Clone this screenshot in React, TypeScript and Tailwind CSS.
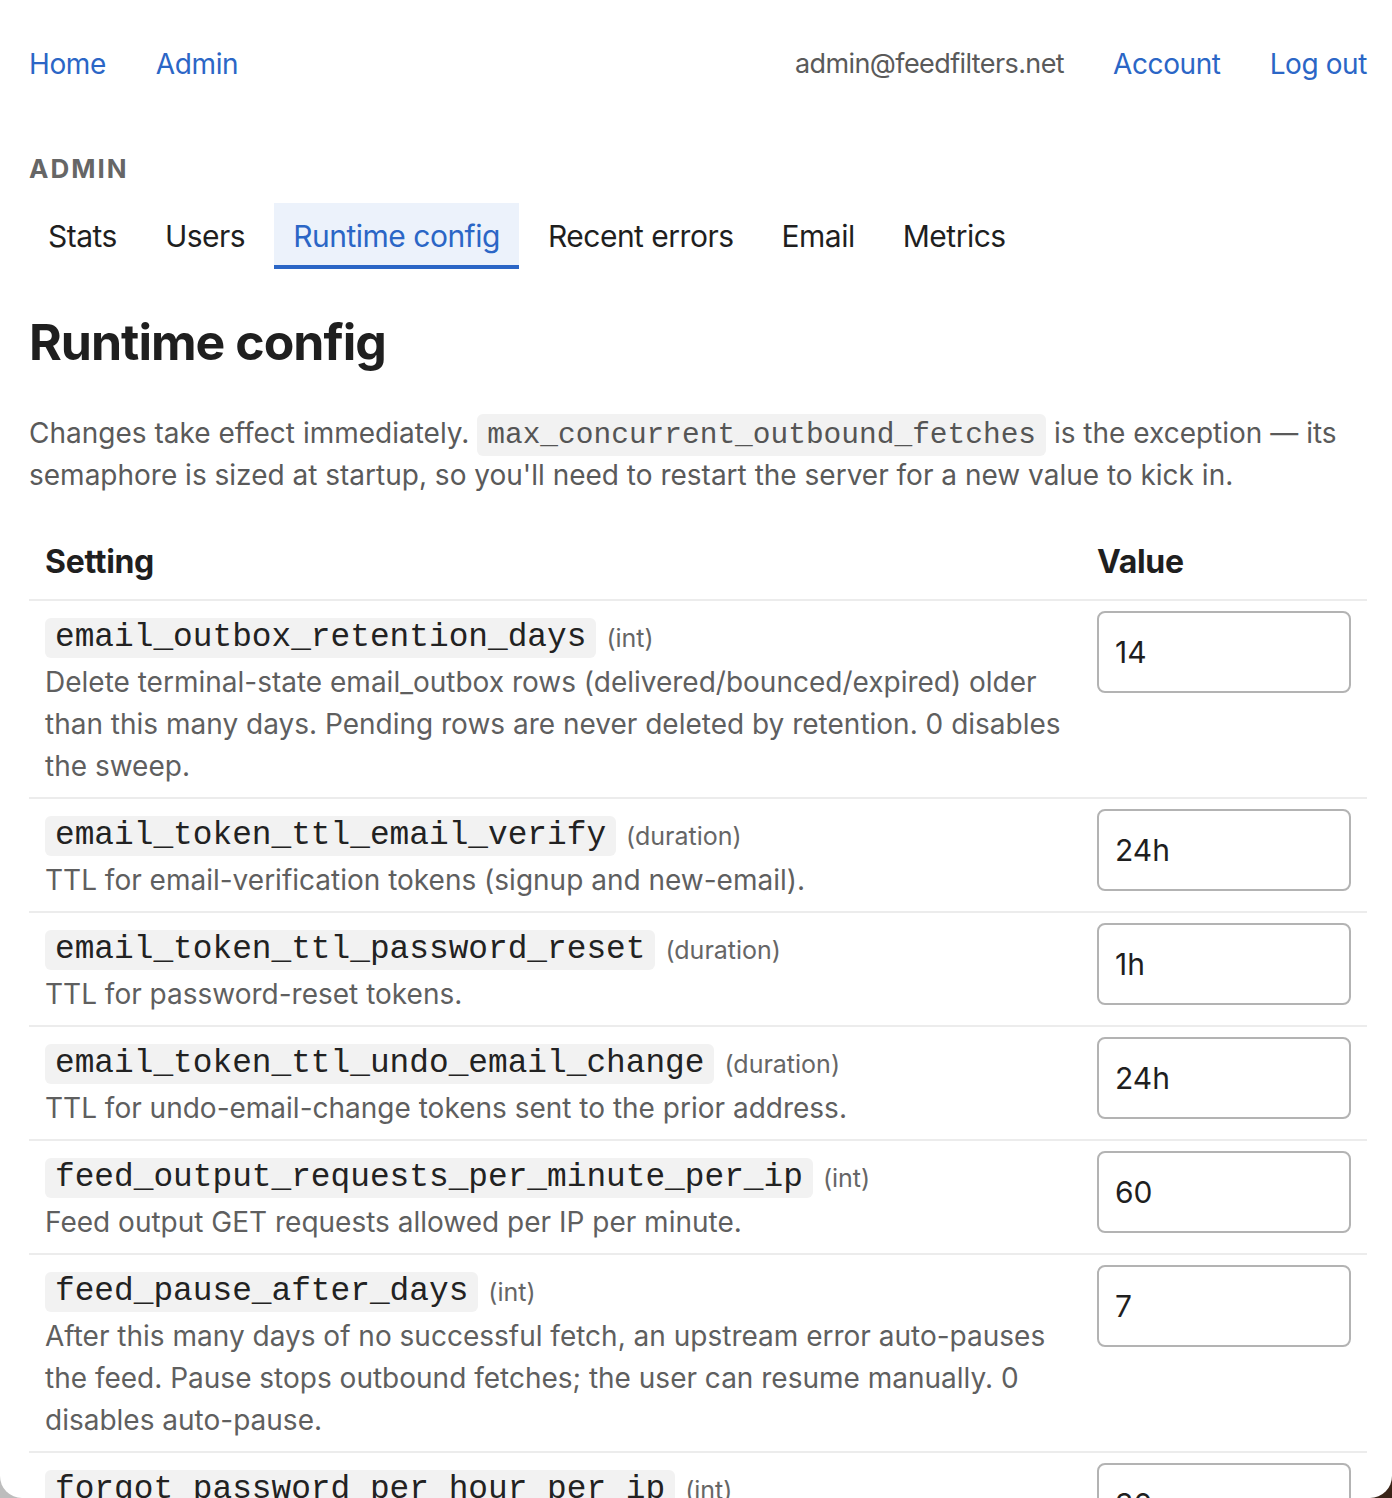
const SANS = "font-['Inter','Noto_Sans',sans-serif]";
const MONO = "font-['Liberation_Mono','DejaVu_Sans_Mono',monospace]";

type Setting = {
  key: string;
  kind: string;
  description: string;
  value: string;
};

const SETTINGS: Setting[] = [
  {
    key: "email_outbox_retention_days",
    kind: "int",
    description:
      "Delete terminal-state email_outbox rows (delivered/bounced/expired) older than this many days. Pending rows are never deleted by retention. 0 disables the sweep.",
    value: "14",
  },
  {
    key: "email_token_ttl_email_verify",
    kind: "duration",
    description: "TTL for email-verification tokens (signup and new-email).",
    value: "24h",
  },
  {
    key: "email_token_ttl_password_reset",
    kind: "duration",
    description: "TTL for password-reset tokens.",
    value: "1h",
  },
  {
    key: "email_token_ttl_undo_email_change",
    kind: "duration",
    description: "TTL for undo-email-change tokens sent to the prior address.",
    value: "24h",
  },
  {
    key: "feed_output_requests_per_minute_per_ip",
    kind: "int",
    description: "Feed output GET requests allowed per IP per minute.",
    value: "60",
  },
  {
    key: "feed_pause_after_days",
    kind: "int",
    description:
      "After this many days of no successful fetch, an upstream error auto-pauses the feed. Pause stops outbound fetches; the user can resume manually. 0 disables auto-pause.",
    value: "7",
  },
  {
    key: "forgot_password_per_hour_per_ip",
    kind: "int",
    description: "Forgot-password requests allowed per IP per hour.",
    value: "30",
  },
];

const TABS = ["Stats", "Users", "Runtime config", "Recent errors", "Email", "Metrics"];

function TopNav() {
  return (
    <nav className="flex h-[86px] items-end justify-between pb-[2px] text-[28px] leading-[40px] tracking-[-0.4px]">
      <div className="flex gap-[50px] text-[#2b66c6]">
        <a>Home</a>
        <a>Admin</a>
      </div>
      <div className="flex items-end gap-[49px]">
        <span className="text-[27px] tracking-[-0.6px] text-[#5a5a5a]">admin@feedfilters.net</span>
        <a className="text-[#2b66c6]">Account</a>
        <a className="text-[#2b66c6]">Log out</a>
      </div>
    </nav>
  );
}

function Tabs() {
  return (
    <div className="mt-[19px] flex gap-[10px]">
      {TABS.map((tab) => {
        const active = tab === "Runtime config";
        return (
          <div
            key={tab}
            className={
              active
                ? "flex h-[66px] items-center border-b-4 border-[#2b66c6] bg-[#ecf2fb] px-[19px] pt-[4px] text-[30px] tracking-[-0.5px] text-[#2b66c6]"
                : "flex h-[66px] items-center border-b-4 border-transparent px-[19px] pt-[4px] text-[30px] tracking-[-0.5px] text-[#1f1f1f]"
            }
          >
            {tab}
          </div>
        );
      })}
    </div>
  );
}

function SettingRow({ setting }: { setting: Setting }) {
  return (
    <tr className="border-t-2 border-[#ececec] align-top">
      <td className="pt-[14px] pr-[16px] pb-[10px] pl-[16px]">
        <div className="flex items-center gap-[10px] leading-[46px]">
          <code
            className={`${MONO} rounded-[6px] bg-[#f2f2f2] px-[10px] py-[1px] text-[32.8px] leading-[38px] text-[#222]`}
          >
            {setting.key}
          </code>
          <span className="text-[25px] text-[#666]">({setting.kind})</span>
        </div>
        <p className="text-[28px] leading-[42px] text-[#5f5f5f]">{setting.description}</p>
      </td>
      <td className="w-[286px] pt-[10px] pr-[16px] pb-[10px] pl-[16px]">
        <input
          readOnly
          value={setting.value}
          className={`${SANS} h-[82px] w-[254px] rounded-[8px] border-2 border-[#b3b3b3] bg-white px-[16px] text-[30px] text-[#1f1f1f] outline-none`}
        />
      </td>
    </tr>
  );
}

export default function App() {
  return (
    <div className={`${SANS} relative h-[1498px] overflow-hidden bg-white`}>
      <div className="pr-[25px] pl-[29px]">
        <TopNav />

        <div className="mt-[68px] text-[26px] leading-[30px] font-bold tracking-[2px] text-[#666]">
          ADMIN
        </div>

        <Tabs />

        <h1 className="mt-[41px] text-[50px] leading-[64px] font-bold tracking-[-1px] text-[#1f1f1f]">
          Runtime config
        </h1>

        <p className="mt-[38px] text-[28px] leading-[42px] text-[#5a5a5a]">
          Changes take effect immediately.{" "}
          <code
            className={`${MONO} rounded-[6px] bg-[#f2f2f2] px-[10px] py-[4px] text-[29.5px] leading-none text-[#555]`}
          >
            max_concurrent_outbound_fetches
          </code>{" "}
          is the exception — its semaphore is sized at startup, so you'll need to restart the server
          for a new value to kick in.
        </p>

        <table className="mt-[42px] w-full border-collapse">
          <thead>
            <tr className="text-left text-[32px] leading-[44px] text-[#1f1f1f]">
              <th className="px-[16px] pt-[2px] pb-[15px] font-bold tracking-[-0.3px]">Setting</th>
              <th className="px-[16px] pt-[2px] pb-[15px] font-bold tracking-[-0.3px]">Value</th>
            </tr>
          </thead>
          <tbody>
            {SETTINGS.map((setting) => (
              <SettingRow key={setting.key} setting={setting} />
            ))}
          </tbody>
        </table>
      </div>

      {/* window corners from the screen capture */}
      <div className="absolute bottom-0 left-0 h-[22px] w-[22px] bg-[#bdbdbd]">
        <div className="h-full w-full rounded-bl-[22px] bg-white" />
      </div>
      <div className="absolute right-0 bottom-0 h-[22px] w-[22px] bg-[#3a2418]">
        <div className="h-full w-full rounded-br-[22px] bg-white" />
      </div>
    </div>
  );
}
